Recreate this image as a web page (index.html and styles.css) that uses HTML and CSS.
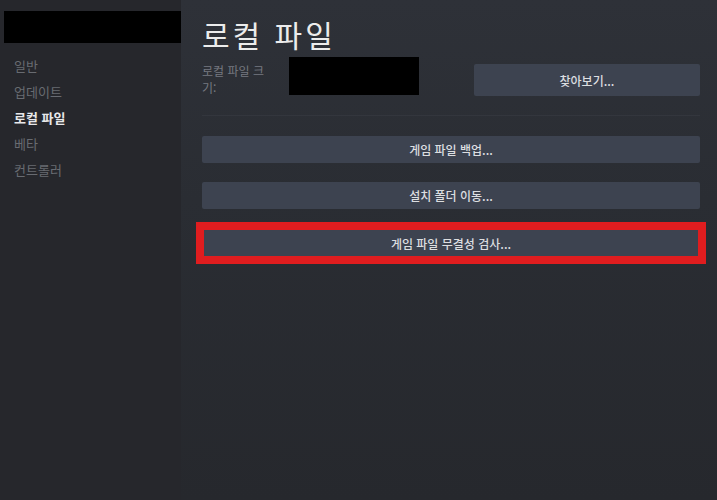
FILE: index.html
```html
<!DOCTYPE html>
<html lang="ko">
<head>
<meta charset="UTF-8" />
<meta name="viewport" content="width=device-width, initial-scale=1" />
<title>로컬 파일</title>
<link rel="stylesheet" href="styles.css">
</head>
<body>
  <div class="window">
    <aside class="sidebar">
      <div class="game-name"></div>
      <nav class="menu">
        <div class="menu-item">일반</div>
        <div class="menu-item">업데이트</div>
        <div class="menu-item active">로컬 파일</div>
        <div class="menu-item">베타</div>
        <div class="menu-item">컨트롤러</div>
      </nav>
    </aside>

    <main class="content">
      <h1>로컬 파일</h1>
      <div class="size-row">
        <div class="size-label">로컬 파일 크기:</div>
        <div class="size-value"></div>
        <button class="btn browse">찾아보기...</button>
      </div>
      <hr class="divider">
      <div class="actions">
        <button class="btn">게임 파일 백업...</button>
        <button class="btn">설치 폴더 이동...</button>
        <button class="btn marked">게임 파일 무결성 검사...</button>
      </div>
    </main>
  </div>
</body>
</html>
```

FILE: styles.css
```css
* {
  box-sizing: border-box;
}
body {
  margin: 0;
  background: #26282d;
  font-family: "Noto Sans CJK KR", "Noto Sans", sans-serif;
}
.window {
  display: flex;
  width: 717px;
  height: 500px;
}

/* sidebar */
.sidebar {
  width: 181px;
  background: #26272c;
  padding-top: 11px;
}
.game-name {
  margin-left: 4px;
  width: 178px;
  height: 32px;
  background: #000;
}
.menu {
  padding: 10px 0 0 14px;
}
.menu-item {
  font-size: 13px;
  line-height: 26px;
  color: #686b71;
}
.menu-item.active {
  color: #e8e8ea;
  font-weight: 700;
}

/* main */
.content {
  flex: 1;
  background: linear-gradient(180deg, #2e3138 0%, #2a2d33 40%, #26282d 100%);
  padding: 13px 17px 0 21px;
}
h1 {
  margin: 0;
  font-size: 30px;
  font-weight: 400;
  line-height: 43px;
  color: #ececec;
  letter-spacing: 3px;
}
.size-row {
  display: flex;
  align-items: flex-start;
  margin-top: 1px;
}
.size-label {
  width: 87px;
  padding-top: 5px;
  font-size: 12px;
  line-height: 17px;
  color: #767980;
  padding-right: 16px;
}
.size-value {
  width: 130px;
  height: 38px;
  background: #000;
}
.btn {
  display: block;
  width: 100%;
  height: 27px;
  border: none;
  border-radius: 2px;
  background: #3d4350;
  color: #dcdee0;
  font-family: inherit;
  font-size: 12px;
  font-weight: 500;
}
.browse {
  width: 226px;
  height: 32px;
  margin: 7px 0 0 auto;
}
.divider {
  border: none;
  border-top: 1px solid #33363d;
  margin: 19px 0 0;
}
.actions {
  display: flex;
  flex-direction: column;
  gap: 19px;
  padding-top: 20px;
}
.marked {
  height: 30px;
  border-radius: 0;
  outline: 8px solid #e01d1f;
  outline-offset: -2px;
}
```
